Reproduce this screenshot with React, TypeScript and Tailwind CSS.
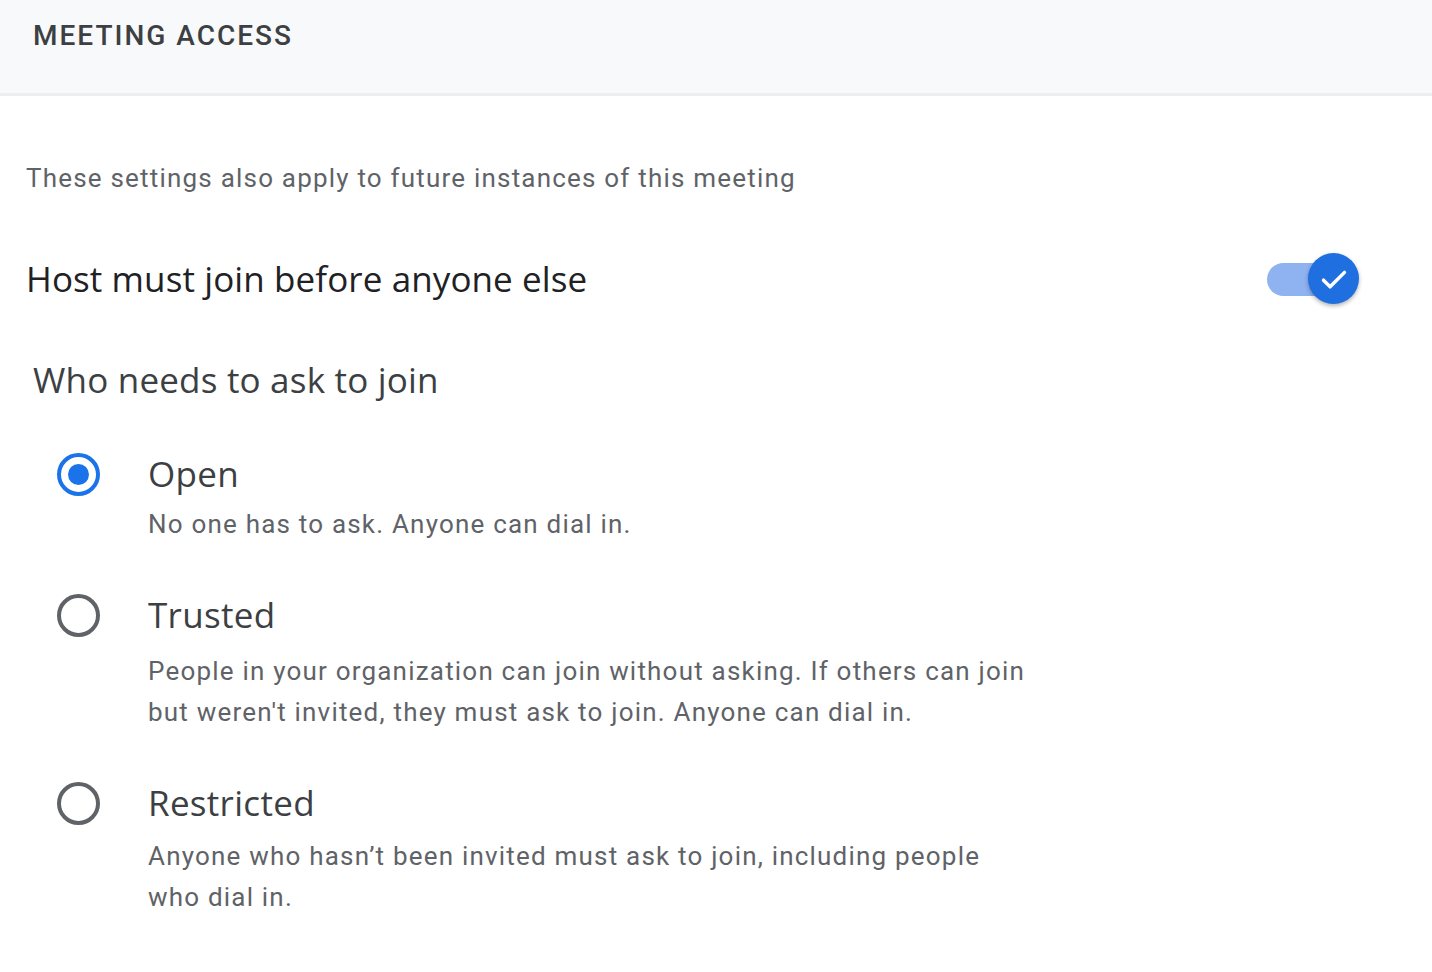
import React from "react";

const sans = { fontFamily: "'Open Sans', Roboto, sans-serif" };
const roboto = { fontFamily: "Roboto, 'Liberation Sans', sans-serif" };

function Radio({ checked }: { checked?: boolean }) {
  return checked ? (
    <div className="flex h-[43px] w-[43px] items-center justify-center rounded-full border-[4px] border-[#1a73e8]">
      <div className="h-[21px] w-[21px] rounded-full bg-[#1a73e8]" />
    </div>
  ) : (
    <div className="h-[43px] w-[43px] rounded-full border-[4px] border-[#5f6368]" />
  );
}

function Option({
  checked,
  label,
  lines,
  gap,
}: {
  checked?: boolean;
  label: string;
  lines: string[];
  gap: string;
}) {
  return (
    <div className="flex">
      <div className="flex w-[122px] shrink-0 justify-start pl-[31px] pt-[2.5px]">
        <Radio checked={checked} />
      </div>
      <div className="flex flex-col">
        <div className="text-[35px] leading-[48px] tracking-[0.3px] text-[#3c4043]" style={sans}>
          {label}
        </div>
        <div className={`${gap} text-[26px] leading-[41px] tracking-[1.2px] text-[#5f6368]`} style={roboto}>
          {lines.map((l, i) => (
            <div key={i}>{l}</div>
          ))}
        </div>
      </div>
    </div>
  );
}

export default function App() {
  return (
    <div className="min-h-[972px] w-[1432px] bg-white">
      <div className="flex h-[96px] items-start border-b-[3px] border-[#eceef0] bg-[#f8f9fa] pl-[33px] pt-[17px]">
        <div
          className="text-[28px] font-medium leading-[38px] tracking-[2px] text-[#3c4043]"
          style={roboto}
        >
          MEETING ACCESS
        </div>
      </div>
      <div className="flex flex-col pl-[26px] pr-[72px]">
        <div className="mt-[62px] text-[26px] leading-[40px] tracking-[1.2px] text-[#5f6368]" style={roboto}>
          These settings also apply to future instances of this meeting
        </div>
        <div className="mt-[51px] flex h-[60px] items-center justify-between">
          <div className="text-[35px] tracking-[0.1px] text-[#202124]" style={sans}>
            Host must join before anyone else
          </div>
          <div className="relative flex h-[60px] w-[94px] items-center">
            <div className="ml-[1px] h-[33px] w-[74px] rounded-full bg-[#8fb2f0]" />
            <div className="absolute right-[1px] top-[4px] flex h-[51px] w-[51px] items-center justify-center rounded-full bg-[#1f6fe0] shadow-[0_2px_4px_rgba(0,0,0,0.3)]">
              <svg width="36" height="36" viewBox="0 0 24 24" fill="none">
                <path d="M5 12.8l4.4 4.4L19 7.6" stroke="white" strokeWidth="2.3" strokeLinecap="round" strokeLinejoin="round" />
              </svg>
            </div>
          </div>
        </div>
        <div className="mt-[46px] pl-[7px] text-[35px] leading-[50px] tracking-[0.2px] text-[#3c4043]" style={sans}>
          Who needs to ask to join
        </div>
        <div className="mt-[45px] flex flex-col">
          <Option checked label="Open" lines={["No one has to ask. Anyone can dial in."]} gap="mt-[6px]" />
          <div className="mt-[46px]">
            <Option
              label="Trusted"
              lines={[
                "People in your organization can join without asking. If others can join",
                "but weren't invited, they must ask to join. Anyone can dial in.",
              ]}
              gap="mt-[12px]"
            />
          </div>
          <div className="mt-[46px]">
            <Option
              label="Restricted"
              lines={[
                "Anyone who hasn\u2019t been invited must ask to join, including people",
                "who dial in.",
              ]}
              gap="mt-[9px]"
            />
          </div>
        </div>
      </div>
    </div>
  );
}
